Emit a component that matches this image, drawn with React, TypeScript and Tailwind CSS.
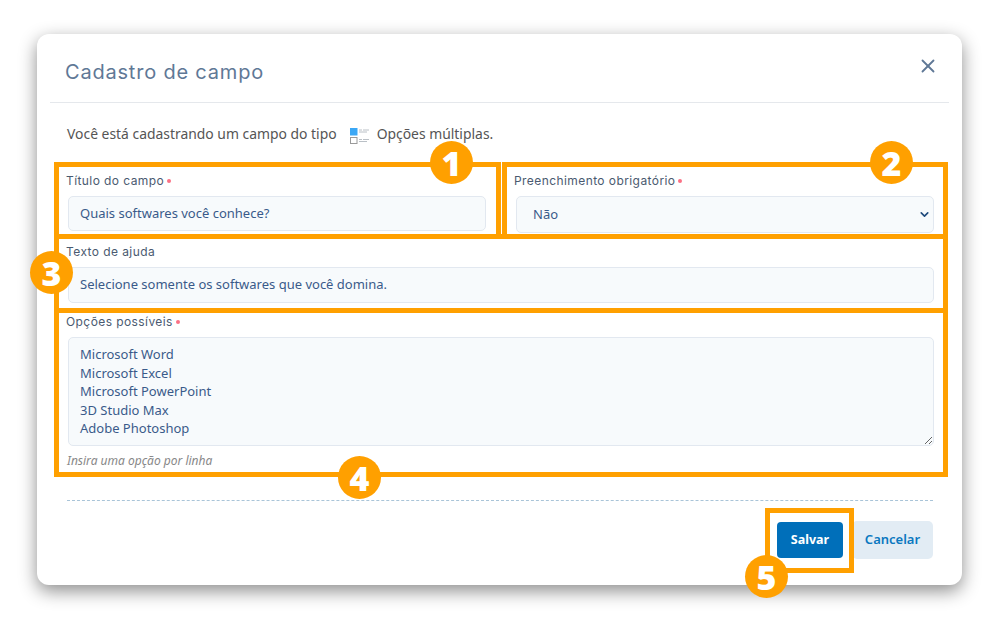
import { ChevronDown, X } from "lucide-react";

const body = "font-['Noto_Sans','Open_Sans',sans-serif]";

const boxes = [
  "left-[54px] top-[162px] w-[447px] h-[77px]",
  "left-[502px] top-[162px] w-[446px] h-[77px]",
  "left-[54px] top-[234px] w-[894px] h-[79px]",
  "left-[54px] top-[308px] w-[894px] h-[169px]",
  "left-[765px] top-[508px] w-[89px] h-[65px]",
];

const badges = [
  { n: "1", pos: "left-[430px] top-[141px]" },
  { n: "2", pos: "left-[870px] top-[141px]" },
  { n: "3", pos: "left-[30px] top-[251px]" },
  { n: "4", pos: "left-[338px] top-[456px]" },
  { n: "5", pos: "left-[745px] top-[555px]" },
];

function Label({ text, required }: { text: string; required?: boolean }) {
  return (
    <label className="-ml-px -mt-px flex h-[17px] items-center gap-[3px] font-['Inter',sans-serif] text-[12px] tracking-[0.42px] text-[#4a5a70]">
      {text}
      {required && <span className="mt-px h-[4px] w-[4px] rounded-full bg-[#fb7185]" />}
    </label>
  );
}

function TypeIcon() {
  return (
    <svg width="21" height="20" viewBox="0 0 21 20" className="ml-[13px] mr-[6px]">
      <rect x="0" y="4" width="7.5" height="7.5" fill="#3ba7f5" />
      <rect x="0.5" y="13.5" width="6.5" height="6" fill="#fff" stroke="#9a9a9a" />
      <path d="M9 6h3M13 6h6M9 8h8" stroke="#a8b0b8" strokeWidth="0.8" />
      <path d="M9 15.5h3M13 15.5h6M9 17.5h8" stroke="#a8b0b8" strokeWidth="0.8" />
    </svg>
  );
}

export default function App() {
  const field =
    "w-full rounded-[5px] border border-[#e2e8f0] bg-[#f7fafc] text-[13px] text-[#3a5a8a] outline-none";

  return (
    <div className={`relative h-[624px] w-[997px] overflow-hidden bg-white pl-[37px] pt-[34px] ${body}`}>
      {/* modal */}
      <div className="h-[551px] w-[925px] rounded-[12px] bg-white px-[13px] shadow-[0_6px_18px_rgba(0,0,0,0.45)]">
        <div className="flex h-[69px] items-start justify-between border-b border-[#e5e8ec] pl-[15px] pr-[10px]">
          <h1 className="mt-[25px] font-['Inter',sans-serif] text-[20px] leading-[27px] tracking-[0.8px] text-[#5f7896]">
            Cadastro de campo
          </h1>
          <X className="mt-[21px] text-[#5f7896]" size={22} strokeWidth={2} />
        </div>

        <div className="pl-[17px] pr-[16px]">
          <p className="mt-[21px] flex h-[20px] items-center text-[13.9px] text-[#555]">
            Você está cadastrando um campo do tipo
            <TypeIcon />
            Opções múltiplas.
          </p>

          <div className="mt-[29px] flex gap-[30px]">
            <div className="w-[418px]">
              <Label text="Título do campo" required />
              <input
                defaultValue="Quais softwares você conhece?"
                className={`${field} ml-px mt-[7px] h-[35px] px-[11px] pb-[2px]`}
              />
            </div>
            <div className="w-[418px]">
              <Label text="Preenchimento obrigatório" required />
              <div className="relative ml-px mt-[7px] w-[418px]">
                <select className={`${field} h-[37px] appearance-none pl-[16px]`}>
                  <option>Não</option>
                </select>
                <ChevronDown className="absolute right-[3px] top-[12px] text-[#1f4a7c]" size={13} strokeWidth={3} />
              </div>
            </div>
          </div>

          <div className="mt-[11px]">
            <Label text="Texto de ajuda" />
            <input
              defaultValue="Selecione somente os softwares que você domina."
              className={`${field} ml-px mt-[7px] h-[36px] w-[866px] px-[11px] pb-[2px]`}
            />
          </div>

          <div className="mt-[11px]">
            <Label text="Opções possíveis" required />
            <textarea
              defaultValue={"Microsoft Word\nMicrosoft Excel\nMicrosoft PowerPoint\n3D Studio Max\nAdobe Photoshop"}
              className={`${field} ml-px mt-[7px] block h-[109px] w-[866px] px-[11px] py-[7px] leading-[18.5px]`}
            />
            <p className="mt-[7px] text-[12px] italic leading-[15px] text-[#888]">Insira uma opção por linha</p>
          </div>

          <div className="mt-[32px] border-t border-dashed border-[#a9c4d8]" />

          <div className="mt-[20px] flex items-center justify-end gap-[9px]">
            <button className="h-[36px] w-[66px] rounded-[4px] bg-[#006fba] text-[12.5px] font-bold text-white">
              Salvar
            </button>
            <button className="h-[38px] w-[81px] rounded-[5px] bg-[#e2ecf4] text-[13px] font-semibold text-[#0a78c0]">
              Cancelar
            </button>
          </div>
        </div>
      </div>

      {/* annotation overlays */}
      {boxes.map((pos) => (
        <div key={pos} className={`pointer-events-none absolute border-[5px] border-[#ffa000] ${pos}`} />
      ))}
      {badges.map((b) => (
        <div
          key={b.n}
          className={`absolute flex h-[43px] w-[43px] items-center justify-center rounded-full bg-[#ffa000] text-[34px] font-black leading-none text-white ${b.pos}`}
        >
          {b.n}
        </div>
      ))}
    </div>
  );
}
